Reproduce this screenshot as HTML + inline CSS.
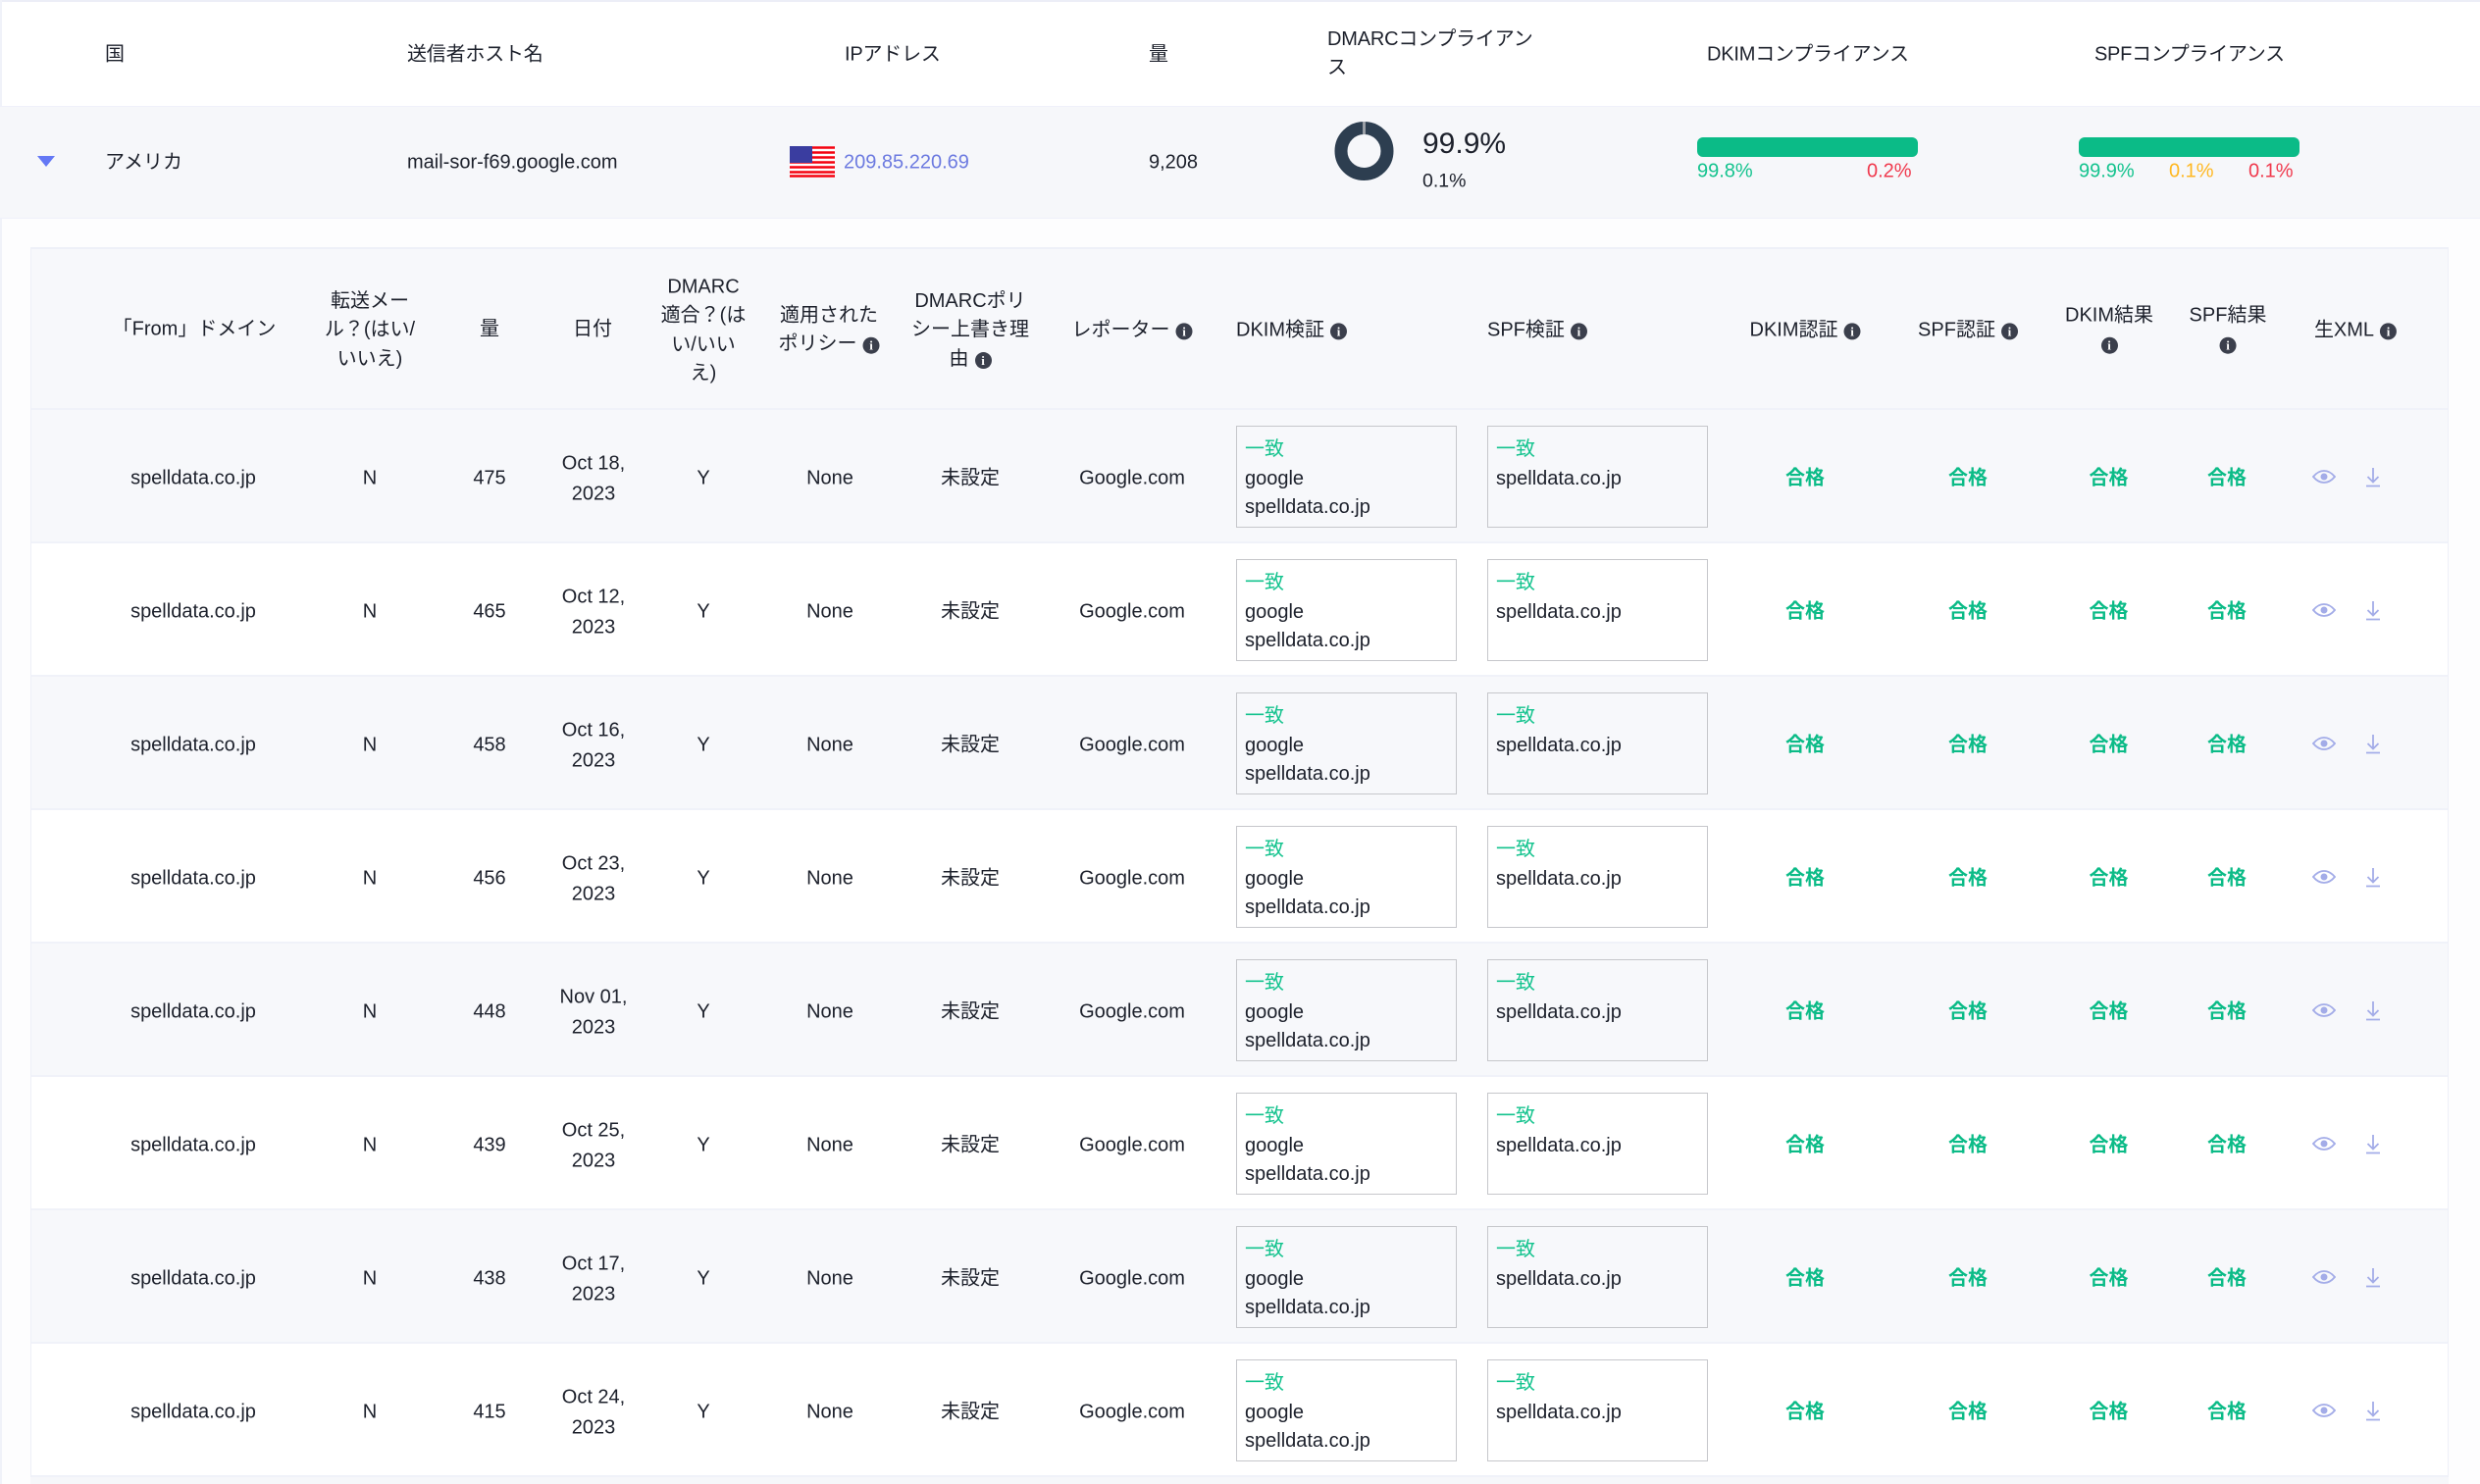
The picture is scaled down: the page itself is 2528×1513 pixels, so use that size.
<!DOCTYPE html>
<html lang="ja"><head><meta charset="utf-8"><title>DMARC</title>
<style>
*{box-sizing:border-box}
html,body{margin:0;padding:0;background:#fff}
body{width:2528px;height:1513px;position:relative;overflow:hidden;font-family:"Liberation Sans","Noto Sans CJK JP",sans-serif;font-size:20px;color:#1c202b}
.a{position:absolute;white-space:nowrap}
.m{position:absolute;white-space:nowrap;transform:translate(-50%,-50%);text-align:center;line-height:29.3px}
.l{position:absolute;white-space:nowrap;transform:translateY(-50%);line-height:29.3px}
.i{display:inline-block;width:17px;height:17px;border-radius:50%;background:#3b3f4c;color:#fff;font:bold 13px/17px "Liberation Serif",serif;text-align:center;vertical-align:0;margin-left:6px}
.i.s{margin-left:0}
.t{letter-spacing:-.2px}
.r{position:absolute;left:31px;width:2465px;height:136px;border-bottom:2px solid #f0f2f9;background:#fff}
.r.g{background:#f7f8fb}
.r .m,.r .l{top:70px}
.c1{left:166px}.c2{left:346px}.c3{left:468px}.c4{left:574px;line-height:30.500px}.c5{left:686px}.c6{left:815px}.c7{left:958px}.c8{left:1123px}
.r .p{color:#0bbb87;font-weight:bold;top:70px}
.p1{left:1809px}.p2{left:1975px}.p3{left:2118.5px}.p4{left:2239px}
.b{position:absolute;top:16px;height:104px;width:225px;border:1.6px solid #c6c7cb;padding:9px 8px 0;line-height:29px}
.b1{left:1229px}.b2{left:1485px}
.b em{font-style:normal;color:#14c38e;display:block;margin-bottom:.5px}
.ey{position:absolute;left:2326px;top:61px}
.dl{position:absolute;left:2380px;top:59px}
.gn{color:#14c38e}.rd{color:#f0394d}.yl{color:#ffb822}
</style></head><body>
<svg width="0" height="0" style="position:absolute"><defs>
<symbol id="eye" viewBox="0 0 24 14"><path d="M1 7C4.500 2.800 8 1 12 1s7.500 1.800 11 6c-3.500 4.200-7 6-11 6S4.500 11.200 1 7z" fill="none" stroke="#a3ace8" stroke-width="1.800"/><circle cx="12" cy="7" r="3.500" fill="#a3ace8"/></symbol>
<symbol id="dl" viewBox="0 0 16 20"><path d="M8 0v14M2.500 9 8 14.500 13.500 9M1 18.500h14" fill="none" stroke="#a3ace8" stroke-width="1.800"/></symbol>
</defs></svg>

<div class="a" style="left:0;top:0;width:2528px;height:2px;background:#eceef7"></div>
<div class="a" style="left:0;top:0;width:2px;height:1513px;background:#f0f2f9"></div>
<div class="a" style="left:0;top:108px;width:2528px;height:115px;background:#f6f7fa;border-top:1px solid #eff1fa;border-bottom:1px solid #eff1fa"></div>
<div class="a" style="left:2px;top:223px;width:2526px;height:1290px;background:#fdfdfe"></div>
<div class="a" style="left:31px;top:1506px;width:2465px;height:7px;background:#f6f7fa"></div>

<div class="l" style="left:107px;top:55.500px">国</div>
<div class="l t" style="left:415px;top:55.500px">送信者ホスト名</div>
<div class="l t" style="left:861px;top:55.500px">IPアドレス</div>
<div class="l" style="left:1171px;top:55.500px">量</div>
<div class="l t" style="left:1353px;top:55px;line-height:29px">DMARCコンプライアン<br>ス</div>
<div class="l t" style="left:1740px;top:55.500px">DKIMコンプライアンス</div>
<div class="l" style="left:2135px;top:55.500px;letter-spacing:-.3px">SPFコンプライアンス</div>

<svg class="a" style="left:38px;top:159px" width="18" height="11" viewBox="0 0 18 11"><path d="M0 0h18L9 11z" fill="#6478f5"/></svg>
<div class="l" style="left:107px;top:165.500px">アメリカ</div>
<div class="l" style="left:415px;top:165.500px">mail-sor-f69.google.com</div>
<svg class="a" style="left:805px;top:149px" width="46" height="32" viewBox="0 0 46 32"><rect width="46" height="32" fill="#fff"/><path d="M0 1.500h46M0 6.500h46M0 11.500h46M0 16.500h46M0 21.500h46M0 26.500h46M0 30.500h46" stroke="#f4000f" stroke-width="2.600"/><rect width="23" height="17" fill="#3a3da0"/></svg>
<div class="l" style="left:860px;top:165.500px;color:#6c7ae0;font-size:20px">209.85.220.69</div>
<div class="l" style="left:1171px;top:165.500px">9,208</div>

<svg class="a" style="left:1360px;top:124px" width="61" height="60" viewBox="0 0 61 60"><circle cx="30.500" cy="30" r="23.500" fill="none" stroke="#2d3e50" stroke-width="13"/><rect x="29" y="0" width="3" height="13" fill="#9a9fa6"/></svg>
<div class="l" style="left:1450px;top:147px;font-size:30px;line-height:36px">99.9%</div>
<div class="l" style="left:1450px;top:184.500px;font-size:19.500px">0.1%</div>

<div class="a" style="left:1730px;top:140px;width:225px;height:20px;border-radius:6px;background:#0bbb87"></div>
<div class="l gn" style="left:1730px;top:175px;font-size:20px">99.8%</div>
<div class="l rd" style="left:1903px;top:175px;font-size:20px">0.2%</div>
<div class="a" style="left:2119px;top:140px;width:225px;height:20px;border-radius:6px;background:#0bbb87"></div>
<div class="l gn" style="left:2119px;top:175px;font-size:20px">99.9%</div>
<div class="l yl" style="left:2211px;top:175px;font-size:20px">0.1%</div>
<div class="l rd" style="left:2292px;top:175px;font-size:20px">0.1%</div>

<div class="a" style="left:31px;top:252px;width:2465px;height:166px;background:#f7f8fb;border-top:2px solid #eef0f8;border-bottom:2px solid #f0f2f9"></div>
<div class="a" style="left:31px;top:252px;width:1px;height:1254px;background:#eef0f8;z-index:3"></div>
<div class="a" style="left:2495px;top:252px;width:1px;height:1254px;background:#eef0f8;z-index:3"></div>

<div class="m" style="left:198px;top:336px">「From」ドメイン</div>
<div class="m" style="left:377px;top:337px">転送メー<br>ル？(はい/<br>いいえ)</div>
<div class="m" style="left:499px;top:336px">量</div>
<div class="m" style="left:604px;top:336px">日付</div>
<div class="m" style="left:717px;top:337px">DMARC<br>適合？(は<br>い/いい<br>え)</div>
<div class="m" style="left:845px;top:337px">適用された<br>ポリシー<span class="i">i</span></div>
<div class="m" style="left:989px;top:337px">DMARCポリ<br>シー上書き理<br>由<span class="i">i</span></div>
<div class="m" style="left:1154px;top:337px">レポーター<span class="i">i</span></div>
<div class="l" style="left:1260px;top:337px">DKIM検証<span class="i">i</span></div>
<div class="l" style="left:1516px;top:337px">SPF検証<span class="i">i</span></div>
<div class="m" style="left:1840px;top:337px">DKIM認証<span class="i">i</span></div>
<div class="m" style="left:2006px;top:337px">SPF認証<span class="i">i</span></div>
<div class="m" style="left:2150px;top:337px">DKIM結果<br><span class="i s">i</span></div>
<div class="m" style="left:2271px;top:337px">SPF結果<br><span class="i s">i</span></div>
<div class="m" style="left:2401px;top:337px">生XML<span class="i">i</span></div>

<div class="r g" style="top:418px"><div class="m c1">spelldata.co.jp</div><div class="m c2">N</div><div class="m c3">475</div><div class="m c4">Oct 18,<br>2023</div><div class="m c5">Y</div><div class="m c6">None</div><div class="m c7">未設定</div><div class="m c8">Google.com</div><div class="b b1"><em>一致</em>google<br>spelldata.co.jp</div><div class="b b2"><em>一致</em>spelldata.co.jp</div><div class="m p p1">合格</div><div class="m p p2">合格</div><div class="m p p3">合格</div><div class="m p p4">合格</div><svg class="ey" width="24" height="14"><use href="#eye"/></svg><svg class="dl" width="16" height="20"><use href="#dl"/></svg></div>

<div class="r" style="top:554px"><div class="m c1">spelldata.co.jp</div><div class="m c2">N</div><div class="m c3">465</div><div class="m c4">Oct 12,<br>2023</div><div class="m c5">Y</div><div class="m c6">None</div><div class="m c7">未設定</div><div class="m c8">Google.com</div><div class="b b1"><em>一致</em>google<br>spelldata.co.jp</div><div class="b b2"><em>一致</em>spelldata.co.jp</div><div class="m p p1">合格</div><div class="m p p2">合格</div><div class="m p p3">合格</div><div class="m p p4">合格</div><svg class="ey" width="24" height="14"><use href="#eye"/></svg><svg class="dl" width="16" height="20"><use href="#dl"/></svg></div>

<div class="r g" style="top:690px"><div class="m c1">spelldata.co.jp</div><div class="m c2">N</div><div class="m c3">458</div><div class="m c4">Oct 16,<br>2023</div><div class="m c5">Y</div><div class="m c6">None</div><div class="m c7">未設定</div><div class="m c8">Google.com</div><div class="b b1"><em>一致</em>google<br>spelldata.co.jp</div><div class="b b2"><em>一致</em>spelldata.co.jp</div><div class="m p p1">合格</div><div class="m p p2">合格</div><div class="m p p3">合格</div><div class="m p p4">合格</div><svg class="ey" width="24" height="14"><use href="#eye"/></svg><svg class="dl" width="16" height="20"><use href="#dl"/></svg></div>

<div class="r" style="top:826px"><div class="m c1">spelldata.co.jp</div><div class="m c2">N</div><div class="m c3">456</div><div class="m c4">Oct 23,<br>2023</div><div class="m c5">Y</div><div class="m c6">None</div><div class="m c7">未設定</div><div class="m c8">Google.com</div><div class="b b1"><em>一致</em>google<br>spelldata.co.jp</div><div class="b b2"><em>一致</em>spelldata.co.jp</div><div class="m p p1">合格</div><div class="m p p2">合格</div><div class="m p p3">合格</div><div class="m p p4">合格</div><svg class="ey" width="24" height="14"><use href="#eye"/></svg><svg class="dl" width="16" height="20"><use href="#dl"/></svg></div>

<div class="r g" style="top:962px"><div class="m c1">spelldata.co.jp</div><div class="m c2">N</div><div class="m c3">448</div><div class="m c4">Nov 01,<br>2023</div><div class="m c5">Y</div><div class="m c6">None</div><div class="m c7">未設定</div><div class="m c8">Google.com</div><div class="b b1"><em>一致</em>google<br>spelldata.co.jp</div><div class="b b2"><em>一致</em>spelldata.co.jp</div><div class="m p p1">合格</div><div class="m p p2">合格</div><div class="m p p3">合格</div><div class="m p p4">合格</div><svg class="ey" width="24" height="14"><use href="#eye"/></svg><svg class="dl" width="16" height="20"><use href="#dl"/></svg></div>

<div class="r" style="top:1098px"><div class="m c1">spelldata.co.jp</div><div class="m c2">N</div><div class="m c3">439</div><div class="m c4">Oct 25,<br>2023</div><div class="m c5">Y</div><div class="m c6">None</div><div class="m c7">未設定</div><div class="m c8">Google.com</div><div class="b b1"><em>一致</em>google<br>spelldata.co.jp</div><div class="b b2"><em>一致</em>spelldata.co.jp</div><div class="m p p1">合格</div><div class="m p p2">合格</div><div class="m p p3">合格</div><div class="m p p4">合格</div><svg class="ey" width="24" height="14"><use href="#eye"/></svg><svg class="dl" width="16" height="20"><use href="#dl"/></svg></div>

<div class="r g" style="top:1234px"><div class="m c1">spelldata.co.jp</div><div class="m c2">N</div><div class="m c3">438</div><div class="m c4">Oct 17,<br>2023</div><div class="m c5">Y</div><div class="m c6">None</div><div class="m c7">未設定</div><div class="m c8">Google.com</div><div class="b b1"><em>一致</em>google<br>spelldata.co.jp</div><div class="b b2"><em>一致</em>spelldata.co.jp</div><div class="m p p1">合格</div><div class="m p p2">合格</div><div class="m p p3">合格</div><div class="m p p4">合格</div><svg class="ey" width="24" height="14"><use href="#eye"/></svg><svg class="dl" width="16" height="20"><use href="#dl"/></svg></div>

<div class="r" style="top:1370px"><div class="m c1">spelldata.co.jp</div><div class="m c2">N</div><div class="m c3">415</div><div class="m c4">Oct 24,<br>2023</div><div class="m c5">Y</div><div class="m c6">None</div><div class="m c7">未設定</div><div class="m c8">Google.com</div><div class="b b1"><em>一致</em>google<br>spelldata.co.jp</div><div class="b b2"><em>一致</em>spelldata.co.jp</div><div class="m p p1">合格</div><div class="m p p2">合格</div><div class="m p p3">合格</div><div class="m p p4">合格</div><svg class="ey" width="24" height="14"><use href="#eye"/></svg><svg class="dl" width="16" height="20"><use href="#dl"/></svg></div>
</body></html>
